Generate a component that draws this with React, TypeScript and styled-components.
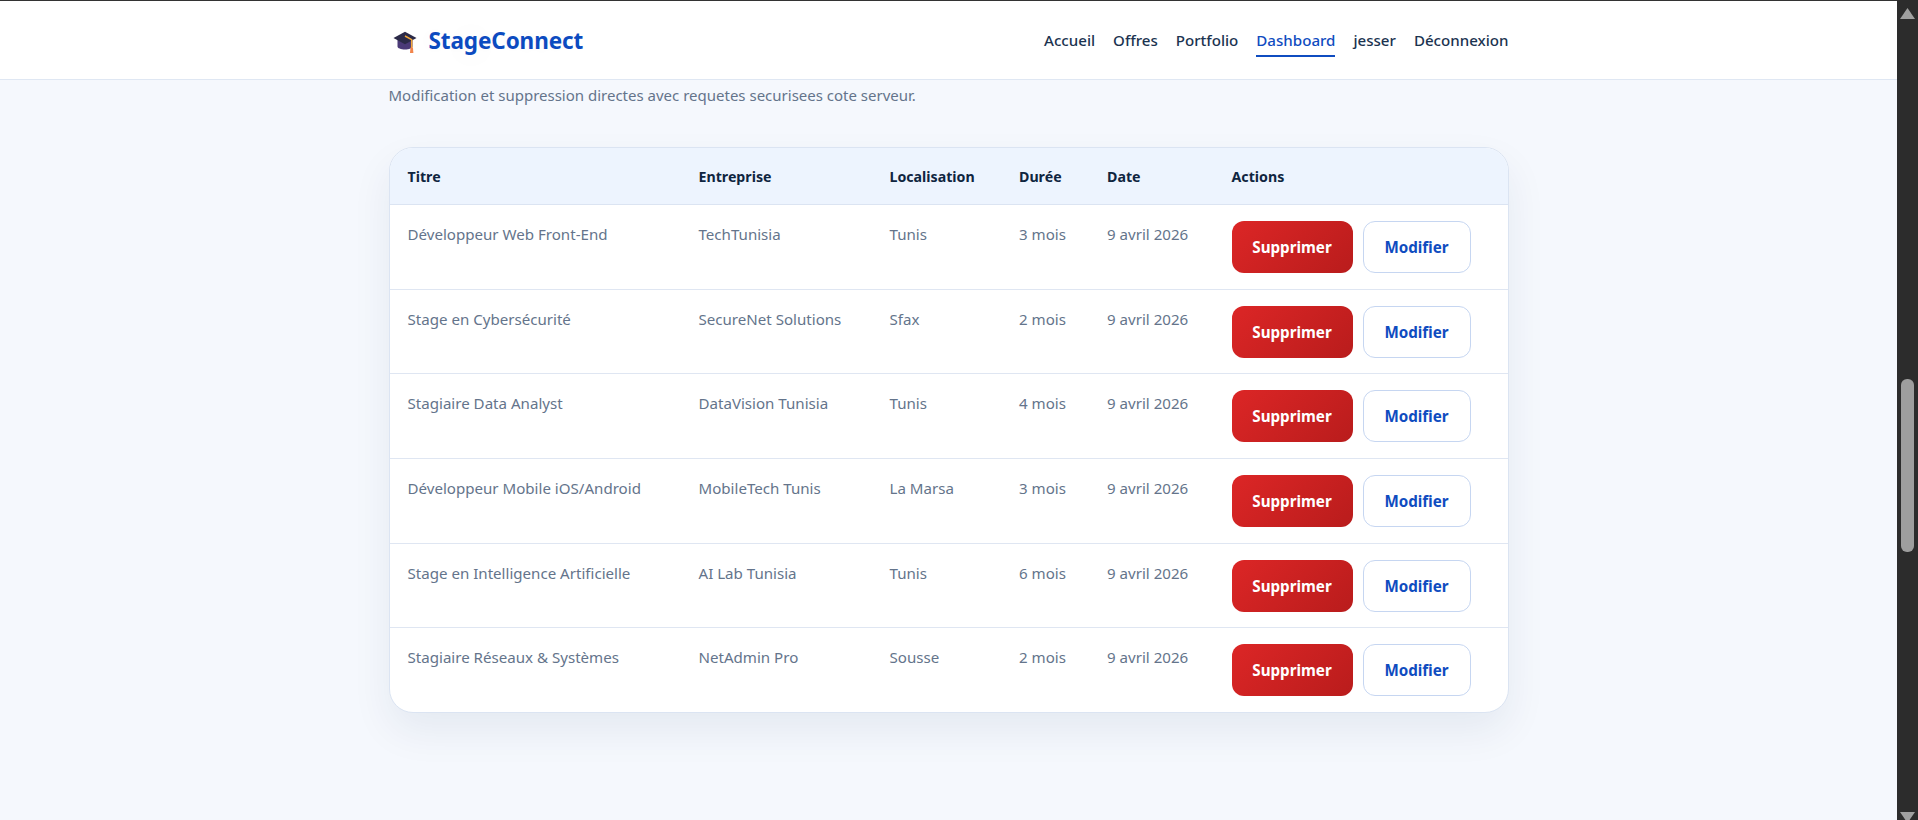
import React from "react";
import styled, { createGlobalStyle } from "styled-components";

const GlobalStyle = createGlobalStyle`
	html, body {
		margin: 0;
		padding: 0;
		height: 100%;
		overflow: hidden;
		background: #f5f8fd;
		font-family: "Noto Sans", "Open Sans", sans-serif;
	}
	* {
		box-sizing: border-box;
	}
`;

const Shell = styled.div`
	display: flex;
	height: 820px;
	overflow: hidden;
`;

const Page = styled.div`
	flex: 1;
	min-width: 0;
	background: #f5f8fd;
`;

const Header = styled.header`
	height: 80px;
	background: #fff;
	border-top: 1px solid #333;
	border-bottom: 1px solid #dfe7f3;
`;

const HeaderInner = styled.div`
	width: 1120px;
	height: 100%;
	margin: 0 auto;
	display: flex;
	align-items: center;
	justify-content: space-between;
`;

const Brand = styled.a`
	display: flex;
	align-items: center;
	gap: 12px;
	padding-left: 4px;
	font-size: 22.5px;
	font-weight: 700;
	letter-spacing: -0.1px;
	color: #0c4bc0;
	text-shadow: 0 0 40px rgba(30, 50, 90, 0.1);
`;

const CapSvg = styled.svg`
	display: block;
	overflow: visible;
`;

const Nav = styled.nav`
	display: flex;
	align-items: center;
	gap: 18px;
`;

const NavLink = styled.a<{ $active?: boolean }>`
	display: block;
	padding: 7px 0 5px;
	font-size: 15.1px;
	line-height: 20px;
	font-weight: 500;
	color: ${({ $active }) => ($active ? "#0f4cc0" : "#1b3350")};
	border-bottom: 2px solid ${({ $active }) => ($active ? "#0f4cc0" : "transparent")};
`;

const Main = styled.main`
	width: 1120px;
	margin: 0 auto;
`;

const Subtitle = styled.p`
	margin: 3px 0 40px;
	font-size: 15px;
	line-height: 24px;
	color: #64748b;
`;

const Card = styled.div`
	background: #fff;
	border: 1px solid #dbe4f2;
	border-radius: 24px;
	overflow: hidden;
	box-shadow: 0 18px 40px rgba(15, 40, 90, 0.07);
`;

const Table = styled.table`
	width: 100%;
	table-layout: fixed;
	border-collapse: collapse;
`;

const HeadCell = styled.th<{ $width: number }>`
	width: ${({ $width }) => $width}px;
	height: 56.5px;
	padding: 0 18px;
	text-align: left;
	font-size: 14.2px;
	font-weight: 700;
	color: #0f2540;
	background: #edf4fe;
	border-bottom: 1px solid #dbe4f2;
`;

const Row = styled.tr`
	height: 84.67px;
	&:not(:last-child) td {
		border-bottom: 1px solid #dfe6f2;
	}
`;

const Cell = styled.td`
	padding: 17px 18px 0;
	vertical-align: top;
	font-size: 15.1px;
	line-height: 24px;
	color: #64748b;
`;

const ActionCell = styled.td`
	padding: 16px 18px 0;
	vertical-align: top;
`;

const Actions = styled.div`
	display: flex;
	gap: 10px;
`;

const BaseButton = styled.button`
	height: 52px;
	border-radius: 12px;
	font-family: inherit;
	font-size: 15.2px;
	font-weight: 700;
`;

const DeleteButton = styled(BaseButton)`
	width: 121px;
	border: none;
	color: #fff;
	background: linear-gradient(135deg, #dc2626, #b91c1c);
`;

const EditButton = styled(BaseButton)`
	width: 108px;
	border: 1px solid #c6d6f1;
	color: #0f4cc0;
	background: #fff;
`;

const Scrollbar = styled.aside`
	width: 21px;
	flex: none;
	display: flex;
	flex-direction: column;
	align-items: center;
	padding-top: 8px;
	background: #2c2c2c;
`;

const Arrow = styled.svg<{ $down?: boolean }>`
	flex: none;
	display: block;
	width: 15px;
	height: 11px;
	fill: #a0a0a0;
	transform: ${({ $down }) => ($down ? "rotate(180deg)" : "none")};
	margin-top: ${({ $down }) => ($down ? "auto" : "0")};
	margin-bottom: ${({ $down }) => ($down ? "-3px" : "0")};
`;

const Thumb = styled.div`
	flex: none;
	width: 13px;
	height: 173px;
	margin-top: 360px;
	border-radius: 6px;
	background: #9e9e9e;
`;

function CapIcon() {
	return (
		<CapSvg width="24" height="24" viewBox="0 0 24 24">
			<path d="M4.500 11v7.500c0 1.600 3.300 3 7.500 3s7.500-1.400 7.500-3V11z" fill="#4b3a78" />
			<path d="M12 3.800 .5 10 12 16.200 23.500 10z" fill="#2b2a48" />
			<path d="M12 8l6.700 3.700V20" fill="none" stroke="#f3a83a" strokeWidth="1.500" />
			<path d="M17.500 19.500h2.400l.5 5.500h-3.400z" fill="#f2854c" />
		</CapSvg>
	);
}

const columns = [
	{ label: "Titre", width: 291 },
	{ label: "Entreprise", width: 191 },
	{ label: "Localisation", width: 129.5 },
	{ label: "Durée", width: 88 },
	{ label: "Date", width: 124.5 },
	{ label: "Actions", width: 294 }
];

const offers = [
	{ title: "Développeur Web Front-End", company: "TechTunisia", city: "Tunis", duration: "3 mois" },
	{ title: "Stage en Cybersécurité", company: "SecureNet Solutions", city: "Sfax", duration: "2 mois" },
	{ title: "Stagiaire Data Analyst", company: "DataVision Tunisia", city: "Tunis", duration: "4 mois" },
	{ title: "Développeur Mobile iOS/Android", company: "MobileTech Tunis", city: "La Marsa", duration: "3 mois" },
	{ title: "Stage en Intelligence Artificielle", company: "AI Lab Tunisia", city: "Tunis", duration: "6 mois" },
	{ title: "Stagiaire Réseaux & Systèmes", company: "NetAdmin Pro", city: "Sousse", duration: "2 mois" }
];

export default function App() {
	return (
		<Shell>
			<GlobalStyle />
			<Page>
				<Header>
					<HeaderInner>
						<Brand>
							<CapIcon />
							StageConnect
						</Brand>
						<Nav>
							<NavLink>Accueil</NavLink>
							<NavLink>Offres</NavLink>
							<NavLink>Portfolio</NavLink>
							<NavLink $active>Dashboard</NavLink>
							<NavLink>jesser</NavLink>
							<NavLink>Déconnexion</NavLink>
						</Nav>
					</HeaderInner>
				</Header>
				<Main>
					<Subtitle>Modification et suppression directes avec requetes securisees cote serveur.</Subtitle>
					<Card>
						<Table>
							<thead>
								<tr>
									{columns.map((column) => (
										<HeadCell key={column.label} $width={column.width}>
											{column.label}
										</HeadCell>
									))}
								</tr>
							</thead>
							<tbody>
								{offers.map((offer) => (
									<Row key={offer.title}>
										<Cell>{offer.title}</Cell>
										<Cell>{offer.company}</Cell>
										<Cell>{offer.city}</Cell>
										<Cell>{offer.duration}</Cell>
										<Cell>9 avril 2026</Cell>
										<ActionCell>
											<Actions>
												<DeleteButton>Supprimer</DeleteButton>
												<EditButton>Modifier</EditButton>
											</Actions>
										</ActionCell>
									</Row>
								))}
							</tbody>
						</Table>
					</Card>
				</Main>
			</Page>
			<Scrollbar>
				<Arrow viewBox="0 0 15 11">
					<path d="M7.500 0 15 11H0z" />
				</Arrow>
				<Thumb />
				<Arrow viewBox="0 0 15 11" $down>
					<path d="M7.500 0 15 11H0z" />
				</Arrow>
			</Scrollbar>
		</Shell>
	);
}
